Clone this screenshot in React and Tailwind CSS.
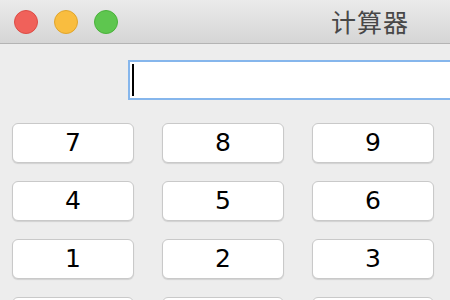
import React from 'react';

const keys = ['7', '8', '9', '4', '5', '6', '1', '2', '3'];

function App() {
  return (
    <div className="w-[450px] h-[300px] overflow-hidden bg-[#ededed]" style={{ fontFamily: '"DejaVu Sans", "Noto Sans CJK SC", sans-serif' }}>
      <div className="h-[44px] flex items-center bg-gradient-to-b from-[#ebebeb] to-[#d5d5d5] border-b border-[#b4b4b4]">
        <div className="flex items-center gap-[16px] pl-[14px]">
          <span className="w-[24px] h-[24px] rounded-full bg-[#f0615a] border border-[#dc4c45]" />
          <span className="w-[24px] h-[24px] rounded-full bg-[#f9bd3f] border border-[#e0a52c]" />
          <span className="w-[24px] h-[24px] rounded-full bg-[#5ec64f] border border-[#4ab23b]" />
        </div>
        <div className="ml-[213px] text-[25px] leading-none text-[#484848] tracking-[1px]" style={{ fontFamily: '"Noto Sans CJK SC", sans-serif' }}>
          计算器
        </div>
      </div>
      <div className="pt-[16px] pl-[128px]">
        <div className="w-[340px] h-[40px] bg-white border-2 border-[#86b6ec] flex items-center pl-[2px]">
          <span className="w-[2px] h-[32px] bg-black" />
        </div>
      </div>
      <div className="grid grid-cols-[122px_122px_122px] gap-x-[28px] gap-y-[18px] pl-[12px] pt-[23px]">
        {keys.map((k) => (
          <div
            key={k}
            className="h-[40px] bg-white border border-[#c9c9c9] rounded-[6px] shadow-[0_1px_1px_rgba(0,0,0,0.12)] flex items-center justify-center text-[25px] text-black"
          >
            {k}
          </div>
        ))}
        {[0, 1, 2].map((i) => (
          <div key={'b' + i} className="h-[40px] bg-white border border-[#c9c9c9] rounded-[6px]" />
        ))}
      </div>
    </div>
  );
}

export default App;
